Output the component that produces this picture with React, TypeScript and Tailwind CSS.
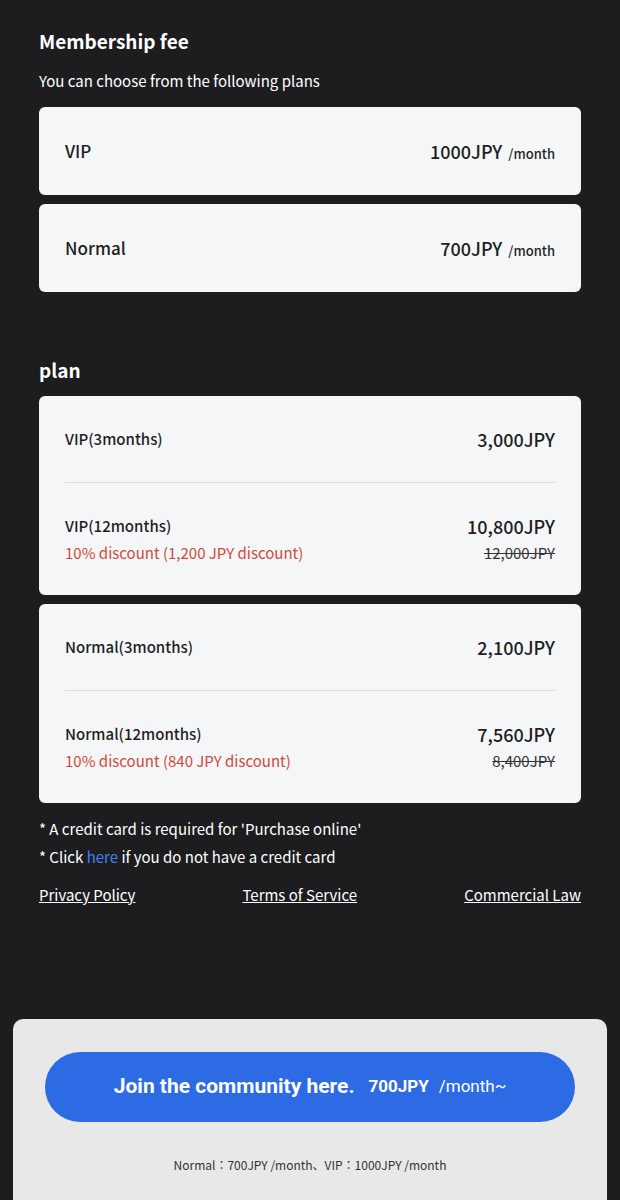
const FONT = "font-['Noto_Sans_CJK_JP','Noto_Sans',sans-serif]";

interface PlanRow {
  label: string;
  price: string;
  discount?: string;
  original?: string;
}

const MONTHLY = [
  { name: "VIP", price: "1000JPY" },
  { name: "Normal", price: "700JPY" },
];

const PLANS: PlanRow[][] = [
  [
    { label: "VIP(3months)", price: "3,000JPY" },
    {
      label: "VIP(12months)",
      price: "10,800JPY",
      discount: "10% discount (1,200 JPY discount)",
      original: "12,000JPY",
    },
  ],
  [
    { label: "Normal(3months)", price: "2,100JPY" },
    {
      label: "Normal(12months)",
      price: "7,560JPY",
      discount: "10% discount (840 JPY discount)",
      original: "8,400JPY",
    },
  ],
];

function PlanCard({ rows }: { rows: PlanRow[] }) {
  return (
    <div className="bg-[#f5f6f8] rounded-md px-[26px]">
      {rows.map((row, i) => (
        <div
          key={row.label}
          className={
            i > 0
              ? "flex justify-between border-t border-[#dcdde0] pt-[30px] pb-[28px]"
              : "flex justify-between py-[30px]"
          }
        >
          <div className="flex flex-col">
            <span className="text-[15px] leading-[26px] font-medium text-[#1f1f1f]">{row.label}</span>
            {row.discount && (
              <span className="text-[15px] leading-[28px] text-[#cf4a3c]">{row.discount}</span>
            )}
          </div>
          <div className="flex flex-col items-end">
            <span className="text-[18px] leading-[26px] font-medium text-[#1f1f1f]">{row.price}</span>
            {row.original && (
              <span className="text-[15px] leading-[28px] line-through text-[#333]">{row.original}</span>
            )}
          </div>
        </div>
      ))}
    </div>
  );
}

export default function App() {
  return (
    <div className={`${FONT} bg-[#1d1d1f] min-h-[1200px] w-full flex flex-col`}>
      <div className="px-[39px] pt-[26px]">
        <h2 className="text-[19px] leading-[30px] font-bold text-white">Membership fee</h2>
        <p className="mt-[14px] text-[15px] leading-[22px] text-white">
          You can choose from the following plans
        </p>
        <div className="mt-[15px] flex flex-col gap-[9px]">
          {MONTHLY.map((m) => (
            <div
              key={m.name}
              className="bg-[#f5f6f8] rounded-md h-[88px] px-[26px] flex items-center justify-between"
            >
              <span className="text-[17px] font-medium text-[#1f1f1f]">{m.name}</span>
              <span className="flex items-baseline text-[#1f1f1f]">
                <span className="text-[18px] font-medium">{m.price}</span>
                <span className="text-[13px] font-medium ml-[6px]">/month</span>
              </span>
            </div>
          ))}
        </div>

        <h2 className="mt-[63px] text-[19px] leading-[30px] font-bold text-white">plan</h2>
        <div className="mt-[11px] flex flex-col gap-[9px]">
          {PLANS.map((rows, i) => (
            <PlanCard key={i} rows={rows} />
          ))}
        </div>

        <div className="mt-[12px] text-[15px] leading-[28px] text-white">
          <p>* A credit card is required for 'Purchase online'</p>
          <p>
            * Click <span className="text-[#3b82f6]">here</span> if you do not have a credit card
          </p>
        </div>

        <div className="mt-[12px] flex justify-between text-[15px] leading-[24px] text-white">
          <a className="underline">Privacy Policy</a>
          <a className="underline">Terms of Service</a>
          <a className="underline">Commercial Law</a>
        </div>
      </div>

      <div className="mt-auto mx-[13px] bg-[#e8e8e8] rounded-t-[10px] px-[32px] pt-[33px] pb-[26px] flex flex-col items-center">
        <button className="w-full h-[70px] rounded-full bg-[#2d6be4] flex items-center justify-center font-['Roboto',sans-serif] text-white">
          <span className="text-[21px] font-bold">Join the community here.</span>
          <span className="text-[17px] font-bold ml-[14px]">700JPY</span>
          <span className="text-[17px] ml-[10px]">/month~</span>
        </button>
        <p className="mt-[34px] text-[12px] leading-[18px] text-[#333]">
          Normal：700JPY /month、VIP：1000JPY /month
        </p>
      </div>
    </div>
  );
}
